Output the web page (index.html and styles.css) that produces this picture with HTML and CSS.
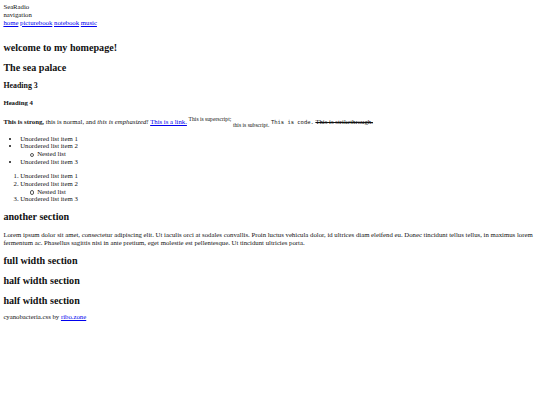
FILE: index.html
```html
<!DOCTYPE html>
<html class="page">
<head>
<meta charset="utf-8">
<link rel="stylesheet" href="styles.css">
</head>
<body class="body">
<header class="site-header">
  <div>SeaRadio</div>
  <nav class="nav">
    <div>navigation</div>
    <a href="#">home</a> <a href="#">picturebook</a> <a href="#">notebook</a> <a href="#">music</a>
  </nav>
</header>
<main class="main">
  <section class="section">
    <h1 class="h2">welcome to my homepage!</h1>
    <h2 class="h2">The sea palace</h2>
    <h3 class="h3">Heading 3</h3>
    <h4 class="h4">Heading 4</h4>
    <p class="para"><strong>This is strong,</strong> this is normal, and <em>this is emphasized!</em> <a href="#">This is a link.</a> <sup class="sup">This is superscript;</sup> <sub class="sub">this is subscript.</sub> <code class="code">This is code.</code> <s>This is strikethrough.</s></p>
    <ul class="list">
      <li>Unordered list item 1</li>
      <li>Unordered list item 2
        <ul class="nested"><li class="nested-item">Nested list</li></ul>
      </li>
      <li>Unordered list item 3</li>
    </ul>
    <ol class="list">
      <li>Unordered list item 1</li>
      <li>Unordered list item 2
        <ul class="nested"><li class="nested-item">Nested list</li></ul>
      </li>
      <li>Unordered list item 3</li>
    </ol>
  </section>
  <section class="section">
    <h2 class="h2">another section</h2>
    <p class="para">Lorem ipsum dolor sit amet, consectetur adipiscing elit. Ut iaculis orci at sodales convallis. Proin luctus vehicula dolor, id ultrices diam eleifend eu. Donec tincidunt tellus tellus, in maximus lorem fermentum ac. Phasellus sagittis nisi in ante pretium, eget molestie est pellentesque. Ut tincidunt ultricies porta.</p>
  </section>
  <section class="section">
    <h2 class="h2">full width section</h2>
  </section>
  <section class="section">
    <h2 class="h2">half width section</h2>
  </section>
  <section class="section">
    <h2 class="h2">half width section</h2>
  </section>
</main>
<footer class="footer">
  <p class="foot-text">cyanobacteria.css by <a href="#">ribo.zone</a></p>
</footer>
</body>
</html>
```

FILE: styles.css
```css
.page {
  font-size: 6.75px;
  background: #fff;
}
.body {
  margin: 0.5em;
  font-family: "Liberation Serif", "Times New Roman", serif;
  font-size: 1em;
  line-height: 1.14;
  color: #111;
}
.body a {
  color: #0000ee;
}
.main {
  padding-top: 1em;
}
.h2 {
  font-size: 1.5em;
  line-height: 1.14;
  margin: 0.83em 0;
}
.h3 {
  font-size: 1.17em;
  line-height: 1.14;
  margin: 1em 0;
}
.h4 {
  font-size: 1em;
  line-height: 1.14;
  margin: 1.33em 0;
}
.para {
  margin: 1em 0;
}
.list {
  margin: 1em 0;
  padding-left: 2.5em;
}
.nested {
  list-style: none;
  padding-left: 2.5em;
  margin: 0;
}
.nested-item {
  position: relative;
}
.nested-item::before {
  content: "";
  position: absolute;
  left: -1.1em;
  top: 0.4em;
  width: 0.36em;
  height: 0.36em;
  border: 0.4px solid #555;
  border-radius: 50%;
}
.sup,
.sub {
  font-size: 0.833em;
}
.code {
  font-family: "DejaVu Sans Mono", "Liberation Mono", monospace;
  font-size: 0.8125em;
}
.footer {
  margin-top: -0.35em;
}
.foot-text {
  margin: 1em 0;
}
```
